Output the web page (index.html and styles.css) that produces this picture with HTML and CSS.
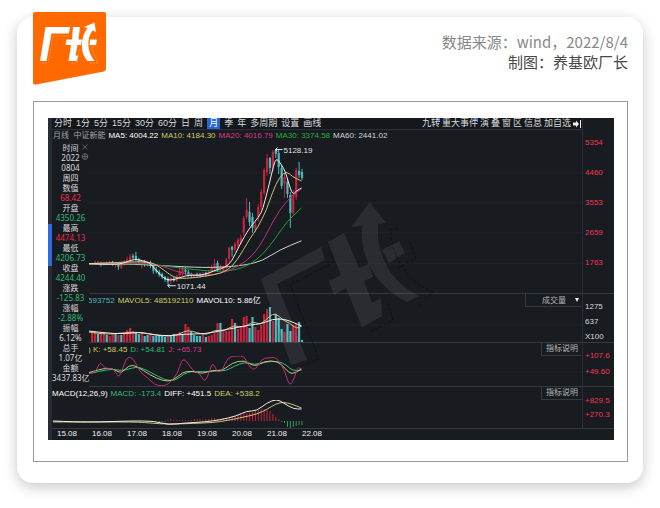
FILE: index.html
```html
<!DOCTYPE html>
<html lang="zh-CN">
<head>
  <meta charset="UTF-8" />
  <meta name="viewport" content="width=device-width, initial-scale=1.0"/>
  <title>中证新能 月线</title>
  <link rel="stylesheet" href="styles.css">
</head>
<body>
  <main class="card">
    <header class="card-header">
      <svg class="logo" viewBox="0 0 73 73" role="img" aria-label="厂长">
        <path fill="#ff6900" d="M2 0H71Q73 0 73 2V57Q73 59 71 59.400L3 72.600Q0 73 0 70V2Q0 0 2 0Z"/>
        <g fill="none" stroke="#ffb27a" stroke-width="0.500" stroke-dasharray="2 1">
          <path d="M9 51H15L20 24H36M38 51H44L47 36M57 51H65L59 38V34H66"/>
        </g>
        <g fill="#fff">
          <path d="M12.500 15H37L36 21.500H18.500L13.500 49H7Z"/>
          <path d="M40 15H47L45.500 27.500H49L48 33H44.500L42.500 43.500H45L44 49H35.500L38 33H32.500L33.500 27.500H39Z"/>
          <path d="M61.500 10.500L63 20L59.500 18.500C53 27 54.500 40 61.500 49H54.500C46 39 48 25 54.500 16L51 15Z"/>
          <path d="M57 27.500H64L63 33H56.500Z"/>
        </g>
      </svg>
      <div class="source">
        <p>数据来源：wind，2022/8/4</p>
        <p class="author">制图：养基欧厂长</p>
      </div>
    </header>

    <section class="frame">
      <div class="terminal">
        <div class="rail"><span class="thumb"></span></div>
        <div class="panes">
          <div class="pane price">
            <div class="plot">
              <nav class="toolbar">
                <div class="tools">
                  <button>分时</button><button>1分</button><button>5分</button><button>15分</button><button>30分</button><button>60分</button><button>日</button><button>周</button><button class="active">月</button><button>季</button><button>年</button><button>多周期</button><button>设置</button><button>画线</button>
                </div>
                <div class="tools tools-right">
                  <button class="flag">九转</button><button class="flag">重大事件</button><button>演</button><button>叠</button><button>窗</button><button>区</button><button>信息</button><button>加自选</button><button aria-label="收起"><svg class="collapse" viewBox="0 0 8 8"><path fill="#eee" d="M0 2.500H3V0.500L6 4L3 7.500V5.500H0ZM7 0H8V8H7Z"/></svg></button>
                </div>
              </nav>
              <div class="legend">
                <span class="dim">月线&nbsp; 中证新能</span>
                <span class="white">MA5: 4004.22</span>
                <span class="yellow">MA10: 4184.30</span>
                <span class="pink">MA20: 4016.79</span>
                <span class="green">MA30: 3374.58</span>
                <span class="light">MA60: 2441.02</span>
              </div>
              <svg class="chart" id="price" viewBox="52 142 531 152" preserveAspectRatio="xMinYMin meet">
                <path class="grid" d="M52 173H583M52 203H583M52 233H583M52 264H583"/>
                <g class="data"></g>
                <path class="mark" d="M283 149.500H276M278 147.500L276 149.500L278 151.500M176 286H168M170 284L168 286L170 288"/>
                <text x="284" y="153">5128.19</text>
                <text x="177" y="289">1071.44</text>
              </svg>
            </div>
            <div class="axis up"><span>5354</span><span>4460</span><span>3553</span><span>2659</span><span>1763</span></div>
          </div>

          <div class="pane volume">
            <div class="plot">
              <div class="legend shifted">
                <span class="cyan">593752</span>
                <span class="yellow">MAVOL5: 485192110</span>
                <span class="white">MAVOL10: 5.86亿</span>
                <label class="picker"><select aria-label="指标"><option>成交量</option></select></label>
              </div>
              <svg class="chart" id="volume" viewBox="52 307 531 36" preserveAspectRatio="xMinYMin meet">
                <path class="grid" d="M52 325H583"/>
                <g class="data"></g>
              </svg>
            </div>
            <div class="axis"><span>1275</span><span>637</span><span>X100</span></div>
          </div>

          <div class="pane kdj">
            <div class="plot">
              <div class="legend shifted">
                <span class="yellow">) K: +58.45</span>
                <span class="teal">D: +54.81</span>
                <span class="pink">J: +65.73</span>
                <button class="help">指标说明</button>
              </div>
              <svg class="chart" id="kdj" viewBox="52 356 531 31" preserveAspectRatio="xMinYMin meet">
                <path class="grid" d="M52 372H583"/>
                <g class="data"></g>
              </svg>
            </div>
            <div class="axis up"><span>+107.6</span><span>+49.60</span></div>
          </div>

          <div class="pane macd">
            <div class="plot">
              <div class="legend">
                <span class="white">MACD(12,26,9)</span>
                <span class="teal">MACD: -173.4</span>
                <span class="white">DIFF: +451.5</span>
                <span class="yellow">DEA: +538.2</span>
                <button class="help">指标说明</button>
              </div>
              <svg class="chart" id="macd" viewBox="52 400 531 29" preserveAspectRatio="xMinYMin meet">
                <g class="data"></g>
              </svg>
            </div>
            <div class="axis up"><span>+829.5</span><span>+270.3</span></div>
          </div>

          <div class="dates"><span>15.08</span><span>16.08</span><span>17.08</span><span>18.08</span><span>19.08</span><span>20.08</span><span>21.08</span><span>22.08</span></div>
        </div>

        <aside class="quote">
          <dl>
            <dt>时间</dt><dd>2022</dd><dd>0804</dd><dd>周四</dd>
            <dt>数值</dt><dd class="red">68.42</dd>
            <dt>开盘</dt><dd class="teal">4350.26</dd>
            <dt>最高</dt><dd class="red">4474.13</dd>
            <dt>最低</dt><dd class="teal">4206.73</dd>
            <dt>收盘</dt><dd class="teal">4244.40</dd>
            <dt>涨跌</dt><dd class="teal">-125.83</dd>
            <dt>涨幅</dt><dd class="teal">-2.88%</dd>
            <dt>振幅</dt><dd>6.12%</dd>
            <dt>总手</dt><dd>1.07亿</dd>
            <dt>金额</dt><dd>3437.83亿</dd>
          </dl>
          <svg class="quote-icons" viewBox="0 0 8 18" fill="none" stroke="#777d84" stroke-width="0.700">
            <path d="M1.500 1.500L6.500 6.500M6.500 1.500L1.500 6.500"/>
            <circle cx="4" cy="13.500" r="2.800"/>
            <path d="M4 10.500V16.500M1 13.500H7"/>
          </svg>
        </aside>

        <svg class="watermark" viewBox="0 0 190 170" aria-hidden="true">
          <path d="M9 79L69 47L73 60L25 84L55 160L39 165Z"/>
          <path d="M76 42L92 33L107 68L117 64L121 77L112 81L120 103L129 98L130 116L110 127L94 88L82 95L77 81L89 75Z"/>
          <path d="M118 2L134 23L126 24C124 57 140 83 167 96L155 102C126 87 107 60 110 26L99 27Z"/>
          <path d="M130 50L147 41L153 53L137 63Z"/>
          <path class="trace" d="M78 52L82 62L38 85L67 159L47 167M158 42L164 58L144 69M146 28L138 30M139 32C139 55 154 82 181 92L166 106M136 103L141 120L118 132"/>
        </svg>
      </div>
    </section>
  </main>
  <script src="chart.js"></script>
</body>
</html>
```
FILE: styles.css
```css
* {
  box-sizing: border-box;
}

body {
  margin: 0;
  padding: 17px;
  background-color: #fff;
  font-family: "Noto Sans CJK SC", sans-serif;
}

p, dl, dd {
  margin: 0;
}

button, select {
  font: inherit;
  color: inherit;
  background: none;
  border: 0;
  padding: 0;
  cursor: pointer;
}

svg {
  display: block;
}

.card {
  background-color: #fff;
  border-radius: 16px;
  padding: 0 15px 21px 16px;
  box-shadow: 0 4px 14px rgba(0, 0, 0, 0.22);
}

.card-header {
  display: flex;
  justify-content: space-between;
  height: 84px;
}

.logo {
  width: 73px;
  height: 73px;
  margin-top: -5px;
}

.source {
  padding-top: 15px;
  text-align: right;
  font-size: 15px;
  line-height: 20px;
  color: #888;
}

.author {
  color: #484848;
}

.frame {
  border: 1px solid #999;
  padding: 16px 13px 21px 14px;
}

.terminal {
  position: relative;
  display: flex;
  background-color: #181b20;
  color: #d8dadc;
  font-family: "Liberation Sans", "Noto Sans CJK SC", sans-serif;
  font-size: 8px;
  line-height: 10px;
}

.rail {
  width: 4px;
  padding-top: 106px;
  background-color: #272b36;
}

.thumb {
  display: block;
  height: 42px;
  background-color: #2f6be0;
}

.panes {
  flex: 1;
  min-width: 0;
}

.pane {
  display: grid;
  grid-template-columns: minmax(0, 1fr) 31px;
  border-bottom: 1px solid #343a40;
}

.price { height: 176px; }
.volume { height: 49px; }
.kdj { height: 44px; }
.macd { height: 42px; }

.plot {
  min-width: 0;
  overflow: hidden;
  border-right: 1px solid #2b3036;
}

.toolbar {
  display: flex;
  justify-content: space-between;
  height: 12px;
  background-color: #14171b;
  border-bottom: 1px solid #2b3036;
  font-size: 9px;
  line-height: 11px;
}

.tools {
  display: flex;
  gap: 4px;
  padding-left: 2px;
  white-space: nowrap;
}

.tools-right {
  gap: 2px;
  padding-right: 1px;
}

.active {
  padding: 0 2px;
  background-color: #2465d8;
  color: #fff;
}

.flag {
  background: linear-gradient(225deg, #2f6be0 3px, transparent 3px);
}

.collapse {
  width: 8px;
  height: 8px;
}

.legend {
  display: flex;
  gap: 3px;
  height: 12px;
  line-height: 12px;
  white-space: nowrap;
}

.price .legend {
  padding-left: 1px;
}

.volume .legend,
.kdj .legend,
.macd .legend {
  height: 13px;
  line-height: 13px;
}

.plot .shifted {
  padding-left: 36px;
}

.picker, .help {
  margin-left: auto;
  height: 13px;
  border: 1px solid #343a40;
  border-top: 0;
  border-right: 0;
  color: #b4b7ba;
}

.picker {
  position: relative;
  width: 57px;
}

.picker select {
  display: block;
  width: 100%;
  height: 12px;
  appearance: none;
  text-align-last: center;
}

.picker::after {
  content: "";
  position: absolute;
  top: 4px;
  right: 3px;
  border: 2px solid transparent;
  border-top: 4px solid #eee;
  border-bottom: 0;
}

.help {
  width: 41px;
  line-height: 12px;
}

.axis {
  display: flex;
  flex-direction: column;
  padding-left: 2px;
}

.price .axis { padding-top: 20px; gap: 20px; }
.volume .axis { padding-top: 8px; gap: 5px; }
.kdj .axis { padding-top: 8px; gap: 6px; }
.macd .axis { padding-top: 9px; gap: 4px; }

.axis.up {
  color: #f23553;
}

.dates {
  display: flex;
  height: 11px;
  padding-left: 5px;
  color: #f0f0f0;
}

.dates span {
  width: 35px;
}

.white { color: #fff; }
.light { color: #d4d6d8; }
.dim { color: #a0a3a7; }
.yellow { color: #ccce62; }
.pink { color: #d63a8a; }
.green { color: #23b03c; }
.teal { color: #2cbd74; }
.cyan { color: #4fb8bd; }
.red { color: #ee2c4c; }

.chart {
  width: 100%;
}

.price .chart { height: 152px; }
.volume .chart { height: 36px; }
.kdj .chart { height: 31px; }
.macd .chart { height: 29px; }

.chart text {
  fill: #e0e2e4;
}

.grid {
  stroke: #1f2328;
}

.mark {
  fill: none;
  stroke: #e4e4e4;
}

.line {
  fill: none;
  stroke-width: 1;
}

.line-white { stroke: #f0eeee; }
.line-gray { stroke: #cfd1d3; }
.line-yellow { stroke: #c9c573; }
.line-pink { stroke: #c02f78; }
.line-green { stroke: #1fa034; }
.line-teal { stroke: #23c486; }

.rise { fill: #c4233d; stroke: #c4233d; }
.fall { fill: #4fb8bd; stroke: #4fb8bd; }
.below { fill: #2a9c5c; stroke: #2a9c5c; }

.bar { stroke: none; }

.quote {
  position: absolute;
  top: 25px;
  left: 4px;
  width: 37px;
  padding-bottom: 7px;
  background-color: #181b20;
  font-family: "Noto Sans", "Noto Sans CJK SC", sans-serif;
  text-align: center;
  white-space: nowrap;
}

.quote-icons {
  position: absolute;
  top: 0;
  right: 0;
  width: 8px;
  height: 18px;
}

.watermark {
  position: absolute;
  top: 82px;
  left: 36%;
  width: 190px;
  height: 170px;
  fill: rgba(255, 255, 255, 0.08);
  pointer-events: none;
}

.trace {
  fill: none;
  stroke: rgba(0, 0, 0, 0.35);
  stroke-dasharray: 3 2;
}
```
FILE: chart.js
```js
const STEP = 2.92;
const LAST_X = 302.5;

function add(id, tag, attrs) {
  const el = document.createElementNS('http://www.w3.org/2000/svg', tag);
  for (const name in attrs) el.setAttribute(name, attrs[name]);
  document.querySelector('#' + id + ' .data').appendChild(el);
}

function bar(id, x, top, height, kind) {
  add(id, 'rect', { x: x - 1.1, y: top, width: 2.2, height: height, class: 'bar ' + kind });
}

// smooth line through a list of "x,y" points
function line(id, color, text) {
  const p = text.split(' ').map(s => s.split(',').map(Number));
  let d = 'M' + p[0];
  for (let i = 1; i < p.length - 1; i++) {
    d += 'Q' + p[i] + ' ' + (p[i][0] + p[i + 1][0]) / 2 + ',' + (p[i][1] + p[i + 1][1]) / 2;
  }
  d += 'L' + p[p.length - 1];
  add(id, 'path', { d: d, class: 'line line-' + color });
}

// newest month first: direction, body top, body bottom, high, low
const candles = [
  ['d', 172, 178, 169, 180], ['d', 171, 175, 162, 178], ['u', 170, 197, 168, 200], ['u', 195, 213, 190, 216],
  ['d', 195, 213, 192, 228], ['d', 182, 194, 178, 198], ['u', 177, 184, 173, 198], ['d', 168, 186, 165, 189],
  ['d', 153, 167, 150, 174], ['d', 150, 154, 149, 158], ['u', 152, 167, 150, 172], ['d', 158, 168, 157, 174],
  ['u', 158, 172, 154, 176], ['u', 170, 193, 168, 195], ['u', 192, 207, 189, 210], ['u', 207, 217, 204, 222],
  ['u', 225, 230, 221, 232], ['d', 217, 228, 213, 233], ['d', 212, 222, 202, 226], ['u', 210, 217, 198, 219],
  ['u', 218, 233, 216, 236], ['u', 238, 243, 235, 245], ['u', 240, 246, 238, 248], ['u', 244, 250, 242, 252],
  ['d', 247, 250, 246, 257], ['u', 248, 259, 247, 262], ['u', 260, 268, 258, 270], ['u', 268, 270, 266, 272],
  ['u', 267, 269, 265, 271], ['d', 263, 270, 261, 272], ['u', 264, 269, 259, 271], ['u', 268, 271, 265, 273],
  ['u', 272, 275, 270, 276], ['d', 273, 275, 272, 277], ['u', 274, 276, 272, 277], ['d', 274, 276, 273, 278],
  ['d', 274, 276, 273, 277], ['u', 275, 277, 274, 278], ['d', 274, 276, 273, 278], ['d', 272, 276, 270, 277],
  ['d', 270, 272, 267, 275], ['u', 268, 274, 267, 276], ['u', 271, 276, 267, 278], ['u', 276, 281, 275, 282],
  ['d', 279, 281, 277, 282], ['u', 278, 281, 277, 284], ['d', 279, 282, 277, 285], ['d', 277, 280, 276, 282],
  ['d', 274, 277, 273, 279], ['d', 272, 275, 270, 277], ['d', 270, 272, 267, 274], ['d', 265, 271, 264, 274],
  ['d', 263, 266, 261, 268], ['u', 262, 265, 261, 267], ['d', 262, 264, 260, 267], ['u', 261, 264, 260, 269],
  ['d', 260, 262, 258, 264], ['d', 256, 260, 252, 261], ['d', 256, 258, 254, 260], ['u', 257, 262, 254, 263],
  ['u', 260, 264, 257, 265], ['u', 262, 264, 260, 266], ['u', 264, 268, 262, 269], ['d', 264, 267, 263, 270],
  ['u', 263, 265, 262, 268], ['d', 262, 264, 261, 266], ['u', 262, 264, 261, 265], ['d', 263, 264, 262, 265],
  ['u', 263, 265, 262, 266], ['d', 263, 265, 262, 267], ['u', 262, 264, 261, 265], ['u', 262, 264, 261, 265]
];

candles.forEach(([dir, top, bottom, high, low], i) => {
  const x = LAST_X - i * STEP;
  const kind = dir === 'u' ? 'rise' : 'fall';
  add('price', 'path', { d: `M${x} ${high}V${low}`, class: kind });
  bar('price', x, top, bottom - top, kind);
});

line('price', 'gray', '88,264 125,264 165,266 205,268 230,267 247,265 263,261 280,250 302,241');
line('price', 'green', '88,264 125,264 150,264 170,267 195,270 220,272 237,270 250,265 263,255 277,237 287,222 302,208');
line('price', 'pink', '88,264 145,262 165,267 185,275 210,276 227,272 247,262 260,247 270,228 280,210 292,196 302,189');
line('price', 'yellow', '88,264 130,262 150,262 160,267 170,275 178,279 195,278 215,275 228,271 238,260 250,239 258,228 267,210 273,192 280,177 287,171 293,177 302,181');
line('price', 'white', '88,264 115,265 125,263 135,259 143,261 150,263 157,271 163,278 170,281 180,278 190,275 200,276 210,273 217,270 225,268 232,262 240,245 250,228 255,222 262,213 265,202 270,183 274,165 277,158 282,165 286,172 289,183 293,195 297,191 302,188');

const volumes = 'd3 d21 u19 u18 d12 d19 u11 d14 d25 d29 u22 d36 u34 u29 u18 u13 u16 d26 d15 u27 u26 u17 u14 d20 u24 u12 u12 u12 d20 u20 u10 u8 u7 d6 u8 d7 d7 d8 d12 u16 u19 d9 u11 u9 d9 d7 u8 d6 d7 d8 d7 d7 u9 d8 d7 u10 d9 d11 u12 u15 u13 u9 d8 u8 d9 u9 u7 d8 u11 u10 d9 u12 u11';

volumes.split(' ').forEach((v, i) => {
  const h = Number(v.slice(1));
  bar('volume', LAST_X - i * STEP, 343 - h, h, v[0] === 'u' ? 'rise' : 'fall');
});

line('volume', 'yellow', '88,332 100,334 115,334 130,332 145,333 160,336 172,336 180,334 188,330 198,333 207,335 215,330 225,331 234,325 245,328 253,321 261,325 270,316 276,313 283,320 290,323 297,329 302,326');
line('volume', 'white', '88,331 105,333 125,334 140,332 155,335 170,336 185,334 205,334 220,331 235,328 250,325 262,324 273,319 285,319 295,323 302,326');

line('kdj', 'teal', '88,374 100,371 113,369 122,371 132,368 140,367 152,373 165,380 175,381 184,374 192,371 203,372 215,371 226,371 235,366 245,362 255,365 265,362 278,361 287,365 293,371 302,370');
line('kdj', 'yellow', '88,373 100,369 113,368 121,374 129,365 137,366 150,375 163,381 173,381 183,372 192,371 203,374 213,370 223,371 232,363 245,360 255,367 265,361 278,361 286,369 292,375 302,369');
line('kdj', 'pink', '88,374 96,373 100,361 105,369 114,368 119,379 124,365 128,356 134,359 140,372 147,377 155,385 162,386 168,385 178,374 182,359 187,361 193,371 200,373 205,383 210,371 213,362 218,373 223,370 228,357 237,356 245,356 250,368 256,370 262,359 268,358 277,357 285,370 290,387 295,378 298,367 302,369');

// MACD histogram, oldest first
const histogram = [-2, -1, -1, 1, 2, 1, 1, 1, 1, 1, 1, 1, 2, 2, 2, 1, 2, 2, 3, 3, 2, 2, 3, 3, 3, 4, 5, 6, 8, 9, 8, 8, 9, 10, 11, 12, 12, 11, 10, 7, 4, 2, -1, -2, -6, -7, -6, -5, -4, -4];
histogram.forEach((h, i) => {
  const x = LAST_X - (histogram.length - 1 - i) * STEP;
  const kind = h > 0 ? 'rise' : 'below';
  add('macd', 'path', { d: `M${x} 421V${421 - h}`, class: kind });
});

line('macd', 'yellow', '53,422 100,422 140,422 160,424 180,424 205,423 220,422 240,418 258,414 268,409 276,404 284,402 292,404 302,408');
line('macd', 'white', '53,421 75,422 100,422 130,421 155,421 168,425 185,423 205,422 220,420 237,416 247,411 257,411 267,403 277,399 284,403 294,409 302,409');
```
